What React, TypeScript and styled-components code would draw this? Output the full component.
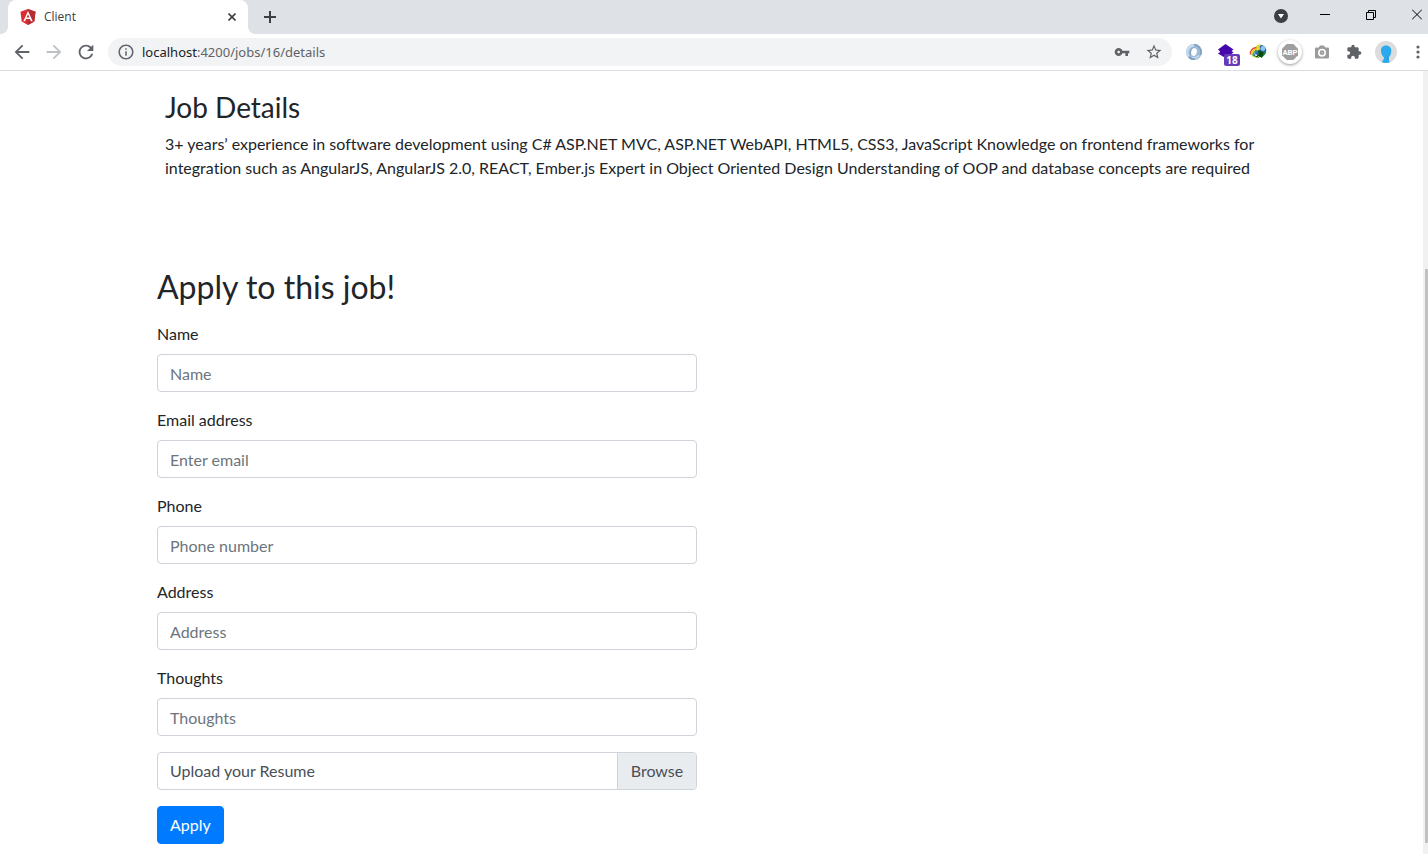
import React, { useState } from "react";
import styled, { createGlobalStyle } from "styled-components";

const GlobalStyle = createGlobalStyle`
  *, *::before, *::after { box-sizing: border-box; }
  html, body { margin: 0; background: #fff; }
  body {
    font-family: Lato, "Liberation Sans", sans-serif;
    font-size: 16px;
    font-variant-ligatures: none;
    line-height: 24px;
    color: #212529;
  }
  button, input { font: inherit; }
  svg { display: block; flex: none; }
`;

const Window = styled.div`
  display: flex;
  flex-direction: column;
  min-height: 100vh;
  overflow: hidden;
`;

/* ---------- browser chrome ---------- */

const TabStrip = styled.div`
  display: flex;
  height: 34px;
  padding-left: 8px;
  background: #dee1e6;
  font-family: "Open Sans", "Noto Sans", sans-serif;
`;

const Tab = styled.div`
  position: relative;
  display: flex;
  align-items: center;
  gap: 8px;
  width: 240px;
  padding: 0 8px 0 12px;
  border-radius: 8px 8px 0 0;
  background: #fff;
  color: #3c4043;
  font-size: 12px;
  line-height: 16px;

  &::before,
  &::after {
    content: "";
    position: absolute;
    bottom: 0;
    width: 8px;
    height: 8px;
  }
  &::before {
    right: 100%;
    background: radial-gradient(circle at 0 0, transparent 8px, #fff 8px);
  }
  &::after {
    left: 100%;
    background: radial-gradient(circle at 100% 0, transparent 8px, #fff 8px);
  }
`;

const TabTitle = styled.span`
  flex: 1;
`;

const IconButton = styled.button<{ $width?: number; $color?: string }>`
  display: flex;
  flex: none;
  align-items: center;
  justify-content: center;
  width: ${(p) => p.$width ?? 32}px;
  height: 32px;
  padding: 0;
  border: 0;
  background: transparent;
  color: ${(p) => p.$color ?? "#5f6368"};
`;

const NewTabButton = styled(IconButton)`
  margin: 1px 0 0 6px;
`;

const WindowControls = styled.div`
  display: flex;
  align-items: flex-start;
  margin-left: auto;
`;

const WindowButton = styled(IconButton)`
  height: 29px;
`;

const CloseWindowButton = styled(WindowButton)`
  margin-left: 12px;
`;

const Toolbar = styled.div`
  display: flex;
  align-items: center;
  height: 37px;
  padding-left: 6px;
  border-bottom: 1px solid #dadce0;
  background: #fff;
`;

const AddressBar = styled.div`
  display: flex;
  flex: 1;
  align-items: center;
  height: 28px;
  margin: 0 6px;
  padding: 0 2px 0 9px;
  border-radius: 14px;
  background: #f1f3f4;
  color: #5f6368;
`;

const Url = styled.div`
  flex: 1;
  padding-left: 7px;
  color: #5f6368;
  font-family: "Noto Sans", "Open Sans", sans-serif;
  font-size: 13px;
  line-height: 20px;
`;

const UrlHost = styled.span`
  color: #202124;
`;

const CountedButton = styled(IconButton)`
  position: relative;
`;

const Badge = styled.span`
  position: absolute;
  right: 2px;
  bottom: 2px;
  width: 16px;
  height: 12px;
  border-radius: 2px;
  background: #673ab7;
  color: #fff;
  font-family: "Open Sans", sans-serif;
  font-size: 10px;
  font-weight: 700;
  line-height: 12px;
  text-align: center;
`;

const BlockerDisc = styled.span`
  display: flex;
  align-items: center;
  justify-content: center;
  width: 24px;
  height: 24px;
  border-radius: 50%;
  background: #fff;
  box-shadow: 0 1px 3px rgba(0, 0, 0, 0.4);
`;

const MenuButton = styled(IconButton)`
  margin-left: 6px;
`;

/* ---------- page ---------- */

const Viewport = styled.div`
  display: flex;
  flex: 1;
`;

const Main = styled.main`
  flex: 1;
  padding: 19px 0 10px 1px;
`;

const Container = styled.div`
  max-width: 1140px;
  margin: 0 auto;
  padding: 0 15px;
`;

const Details = styled.section`
  margin-bottom: 88px;
  padding: 0 8px;
`;

const DetailsTitle = styled.h3`
  margin: 0 0 8px;
  font-size: 28px;
  font-weight: 400;
  line-height: 34px;
`;

const Description = styled.p`
  margin: 0;
`;

const ApplyTitle = styled.h2`
  margin: 0 0 16px;
  font-size: 32px;
  font-weight: 400;
  line-height: 38px;
`;

const Form = styled.form`
  display: flex;
  flex-direction: column;
  align-items: flex-start;
  gap: 16px;
  width: calc(50% - 15px);
`;

const Field = styled.div`
  display: flex;
  flex-direction: column;
  gap: 8px;
  width: 100%;
`;

const TextInput = styled.input`
  width: 100%;
  height: 38px;
  padding: 6px 12px;
  border: 1px solid #ced4da;
  border-radius: 4px;
  background: #fff;
  color: #495057;

  &::placeholder {
    color: #6c757d;
    opacity: 1;
  }
`;

const FilePicker = styled.label`
  position: relative;
  display: flex;
  width: 100%;
  height: 38px;
  border: 1px solid #ced4da;
  border-radius: 4px;
  overflow: hidden;
  color: #495057;
`;

const FileInput = styled.input`
  position: absolute;
  inset: 0;
  opacity: 0;
`;

const FileName = styled.span`
  flex: 1;
  padding: 6px 12px;
`;

const Browse = styled.span`
  min-width: 79px;
  padding: 6px 12px;
  border-left: 1px solid #ced4da;
  background: #e9ecef;
  text-align: center;
`;

const SubmitButton = styled.button`
  height: 38px;
  padding: 6px 12px;
  border: 1px solid #007bff;
  border-radius: 4px;
  background: #007bff;
  color: #fff;
  line-height: 24px;
`;

const ScrollTrack = styled.div`
  display: flex;
  flex-direction: column;
  align-items: flex-end;
  width: 5px;
  background: #f1f1f1;
`;

const ScrollGap = styled.div<{ $share: number }>`
  flex: ${(p) => p.$share} 0 0;
`;

const ScrollThumb = styled.div`
  flex: 574 0 0;
  width: 3px;
  background: #c1c1c1;
`;

/* ---------- icons ---------- */

const Glyph = ({ size, d }: { size: number; d: string }) => (
  <svg width={size} height={size} viewBox="0 0 24 24" fill="currentColor" aria-hidden="true">
    <path d={d} />
  </svg>
);

const icons = {
  back: "M20 11H7.83l5.59-5.59L12 4l-8 8 8 8 1.41-1.41L7.83 13H20v-2z",
  forward: "M12 4l-1.41 1.41L16.17 11H4v2h12.17l-5.58 5.59L12 20l8-8z",
  reload:
    "M17.65 6.35C16.2 4.9 14.21 4 12 4c-4.42 0-7.99 3.58-7.99 8s3.57 8 7.99 8c3.73 0 6.84-2.55 7.73-6h-2.08c-.82 2.33-3.04 4-5.65 4-3.31 0-6-2.69-6-6s2.69-6 6-6c1.66 0 3.14.69 4.22 1.78L13 11h7V4l-2.35 2.35z",
  info: "M11 7h2v2h-2zm0 4h2v6h-2zm1-9C6.48 2 2 6.48 2 12s4.48 10 10 10 10-4.48 10-10S17.52 2 12 2zm0 18c-4.41 0-8-3.59-8-8s3.59-8 8-8 8 3.59 8 8-3.59 8-8 8z",
  key: "M12.65 10C11.83 7.67 9.61 6 7 6c-3.31 0-6 2.69-6 6s2.69 6 6 6c2.61 0 4.83-1.67 5.65-4H17v4h4v-4h2v-4H12.65zM7 14c-1.1 0-2-.9-2-2s.9-2 2-2 2 .9 2 2-.9 2-2 2z",
  star: "M22 9.24l-7.19-.62L12 2 9.19 8.63 2 9.24l5.46 4.73L5.82 21 12 17.27 18.18 21l-1.63-7.03L22 9.24zM12 15.4l-3.76 2.27 1-4.28-3.32-2.88 4.38-.38L12 6.1l1.71 4.04 4.38.38-3.32 2.88 1 4.28L12 15.4z",
  puzzle:
    "M20.5 11H19V7c0-1.1-.9-2-2-2h-4V3.5C13 2.12 11.88 1 10.5 1S8 2.12 8 3.5V5H4c-1.1 0-1.99.9-1.99 2v3.8H3.5c1.49 0 2.7 1.21 2.7 2.7s-1.21 2.7-2.7 2.7H2V20c0 1.1.9 2 2 2h3.8v-1.5c0-1.49 1.21-2.7 2.7-2.7 1.49 0 2.7 1.21 2.7 2.7V22H17c1.1 0 2-.9 2-2v-4h1.5c1.38 0 2.5-1.12 2.5-2.5S21.88 11 20.5 11z",
};

const AngularLogo = () => (
  <svg width="16" height="16" viewBox="0 0 16 16" aria-hidden="true">
    <path d="M8 0l7.5 2.7-1.2 9.8L8 16l-6.3-3.5L.5 2.7z" fill="#dd2b32" />
    <path d="M8 0l7.5 2.7-1.2 9.8L8 16z" fill="#b52e31" />
    <path d="M8 1.9L3.3 12.3h1.8l.9-2.3h4l.9 2.3h1.8L8 1.9zm0 3.4l1.4 3.2H6.6z" fill="#fff" />
  </svg>
);

const Swirl = () => (
  <svg width="16" height="16" viewBox="0 0 16 16" fill="none" aria-hidden="true">
    <circle cx="8" cy="8" r="8" fill="#9dbad6" />
    <path d="M2.500 12.500A7 7 0 0 1 8 1.500" stroke="#c9dcec" strokeWidth="2.400" />
    <path d="M8 .8a7.200 7.200 0 0 1 6.500 10" stroke="#7fa1c1" strokeWidth="1.500" />
    <path d="M13 11.500A6 6 0 0 1 6 13.600" stroke="#c3d8ea" strokeWidth="2" />
    <path d="M3 13.200a7 7 0 0 0 6 1.900" stroke="#6f94b8" strokeWidth="1.200" />
    <path d="M5 11C3.800 8 5 5 8 3.800" stroke="#7c9ec0" strokeWidth="1.200" />
    <ellipse cx="8" cy="8" rx="2.800" ry="3.900" transform="rotate(15 8 8)" fill="#fff" />
  </svg>
);

const Layers = () => (
  <svg width="18" height="18" viewBox="0 0 18 18" aria-hidden="true">
    <path d="M8.500 1L16.500 6.500l-2 1.500 2 1.500L8.500 15 1 10.500 3 8.500 1 6.500z" fill="#4608ad" />
    <path d="M1 8.300l2 1" stroke="#fff" strokeWidth=".8" />
  </svg>
);

const Globe = () => (
  <svg width="18" height="18" viewBox="0 0 18 18" fill="none" aria-hidden="true">
    <circle cx="11.500" cy="7.500" r="5.800" fill="#2765be" />
    <circle cx="14" cy="5.500" r="2.400" fill="#8fc6f4" />
    <path d="M7 3.500c1.500-2 4-2.300 5-1.500l-1.500 2 1 2-3 2-2.500-2z" fill="#d8df3c" />
    <path d="M1.500 11.500C.8 7.500 4 4.300 7.500 4.800" stroke="#e5482b" strokeWidth="1.300" />
    <path d="M2.700 12C2.300 8.500 5 6 8 6.200" stroke="#f6c927" strokeWidth="1.500" />
    <path d="M4 12.500C4 9.800 6 7.800 8.500 7.800" stroke="#49aa3c" strokeWidth="1.600" />
    <path d="M5.300 13C5.500 11 7 9.500 9 9.400" stroke="#3572cc" strokeWidth="1.300" />
    <path d="M8 10.500l4-2.500 4.500 1.500c-.5 2.500-2.500 4.500-4.500 5z" fill="#15802a" />
    <path d="M9 7l5.500 2.500-1.500 5.500-2-1.500-2 1.500-6.500-3 5 1 2.500-2z" fill="#0b4a16" />
    <path d="M3 12.700l5 2 2-1.500" stroke="#a3d42c" />
  </svg>
);

const Blocker = () => (
  <svg width="16" height="16" viewBox="0 0 16 16" aria-hidden="true">
    <path d="M4.700 0h6.600L16 4.700v6.600L11.300 16H4.700L0 11.300V4.700z" fill="#9e9e9e" />
    <text
      x="8"
      y="10.800"
      fill="#fff"
      fontFamily="Roboto, sans-serif"
      fontSize="7.800"
      fontWeight="700"
      textAnchor="middle"
    >
      ABP
    </text>
  </svg>
);

const Camera = () => (
  <svg width="16" height="16" viewBox="0 0 16 16" aria-hidden="true">
    <path d="M2 3.500h2.800L6 1.500h4l1.200 2H14a1 1 0 0 1 1 1v9a1 1 0 0 1-1 1H2a1 1 0 0 1-1-1v-9a1 1 0 0 1 1-1z" fill="#9b9b9b" />
    <circle cx="8" cy="8.700" r="3.200" fill="#9b9b9b" stroke="#fff" strokeWidth="1.600" />
    <circle cx="8" cy="8.700" r="1" fill="#b8b8b8" />
  </svg>
);

const Avatar = () => (
  <svg width="22" height="22" viewBox="0 0 22 22" aria-hidden="true">
    <circle cx="11" cy="11" r="11" fill="#dcdcdc" />
    <path
      d="M6 9.500C6 6.200 8.300 4.500 11 4.500s5.300 1.500 5.300 5.300c0 2.700-.8 5.200-2.500 6.500l.2 3.200 1 1.700a11 11 0 0 1-8.500-.2l2.200-1.800.2-3C7 15 6 12 6 9.500z"
      fill="#2aa9ec"
    />
    <path d="M7.500 20l1.300-1.500M12.800 16l.3 3" stroke="#1682c0" strokeWidth=".6" />
  </svg>
);

/* ---------- content ---------- */

const fields = [
  { id: "name", label: "Name", placeholder: "Name", type: "text" },
  { id: "email", label: "Email address", placeholder: "Enter email", type: "email" },
  { id: "phone", label: "Phone", placeholder: "Phone number", type: "tel" },
  { id: "address", label: "Address", placeholder: "Address", type: "text" },
  { id: "thoughts", label: "Thoughts", placeholder: "Thoughts", type: "text" },
];

const BrowserChrome = () => (
  <header>
    <TabStrip>
      <Tab>
        <AngularLogo />
        <TabTitle>Client</TabTitle>
        <IconButton $width={16} $color="#3c4043" aria-label="Close tab">
          <svg width="8" height="8" viewBox="0 0 8 8" stroke="currentColor" strokeWidth="1.6">
            <path d="M.5.5l7 7M7.500.5l-7 7" />
          </svg>
        </IconButton>
      </Tab>
      <NewTabButton $color="#3c4043" aria-label="New tab">
        <svg width="12" height="12" viewBox="0 0 12 12" stroke="currentColor" strokeWidth="2">
          <path d="M6 0v12M0 6h12" />
        </svg>
      </NewTabButton>
      <WindowControls>
        <IconButton $width={42} $color="#3c4043" aria-label="Search tabs">
          <svg width="14" height="14" viewBox="0 0 14 14">
            <circle cx="7" cy="7" r="7" fill="currentColor" />
            <path d="M4 5h6L7 9.500z" fill="#fff" />
          </svg>
        </IconButton>
        <WindowButton $width={46} $color="#000" aria-label="Minimize">
          <svg width="10" height="11" viewBox="0 0 10 11" stroke="currentColor">
            <path d="M0 5.500h10" />
          </svg>
        </WindowButton>
        <WindowButton $width={46} $color="#000" aria-label="Restore">
          <svg width="10" height="11" viewBox="0 0 10 11" fill="none" stroke="currentColor">
            <path d="M.5 3.500h7v7h-7zM2.500 3.500v-2h7v7h-2" />
          </svg>
        </WindowButton>
        <CloseWindowButton $width={22} $color="#000" aria-label="Close window">
          <svg width="10" height="11" viewBox="0 0 10 11" stroke="currentColor">
            <path d="M0 .5l10 10M10 .5l-10 10" />
          </svg>
        </CloseWindowButton>
      </WindowControls>
    </TabStrip>
    <Toolbar>
      <IconButton aria-label="Back">
        <Glyph size={22} d={icons.back} />
      </IconButton>
      <IconButton $color="#bdc1c6" aria-label="Forward">
        <Glyph size={22} d={icons.forward} />
      </IconButton>
      <IconButton aria-label="Reload">
        <Glyph size={22} d={icons.reload} />
      </IconButton>
      <AddressBar>
        <Glyph size={18} d={icons.info} />
        <Url>
          <UrlHost>localhost</UrlHost>:4200/jobs/16/details
        </Url>
        <IconButton aria-label="Saved passwords">
          <Glyph size={16} d={icons.key} />
        </IconButton>
        <IconButton aria-label="Bookmark this page">
          <Glyph size={18} d={icons.star} />
        </IconButton>
      </AddressBar>
      <IconButton aria-label="Swirl extension">
        <Swirl />
      </IconButton>
      <CountedButton aria-label="Layers extension">
        <Layers />
        <Badge>18</Badge>
      </CountedButton>
      <IconButton aria-label="Download manager">
        <Globe />
      </IconButton>
      <IconButton aria-label="Ad blocker">
        <BlockerDisc>
          <Blocker />
        </BlockerDisc>
      </IconButton>
      <IconButton aria-label="Screenshot">
        <Camera />
      </IconButton>
      <IconButton aria-label="Extensions">
        <Glyph size={16} d={icons.puzzle} />
      </IconButton>
      <IconButton aria-label="Profile">
        <Avatar />
      </IconButton>
      <MenuButton $width={20} aria-label="Menu">
        <svg width="4" height="14" viewBox="0 0 4 14" fill="currentColor">
          <circle cx="2" cy="2" r="1.600" />
          <circle cx="2" cy="7" r="1.600" />
          <circle cx="2" cy="12" r="1.600" />
        </svg>
      </MenuButton>
    </Toolbar>
  </header>
);

export default function App() {
  const [fileName, setFileName] = useState("Upload your Resume");

  return (
    <Window>
      <GlobalStyle />
      <BrowserChrome />
      <Viewport>
        <Main>
          <Container>
            <Details>
              <DetailsTitle>Job Details</DetailsTitle>
              <Description>
                3+ years’ experience in software development using C# ASP.NET MVC, ASP.NET WebAPI,
                HTML5, CSS3, JavaScript Knowledge on frontend frameworks for integration such as
                AngularJS, AngularJS 2.0, REACT, Ember.js Expert in Object Oriented Design
                Understanding of OOP and database concepts are required
              </Description>
            </Details>
            <ApplyTitle>Apply to this job!</ApplyTitle>
            <Form onSubmit={(e) => e.preventDefault()}>
              {fields.map((f) => (
                <Field key={f.id}>
                  <label htmlFor={f.id}>{f.label}</label>
                  <TextInput id={f.id} type={f.type} placeholder={f.placeholder} />
                </Field>
              ))}
              <FilePicker htmlFor="resume">
                <FileInput
                  id="resume"
                  type="file"
                  onChange={(e) => setFileName(e.target.files?.[0]?.name ?? "Upload your Resume")}
                />
                <FileName>{fileName}</FileName>
                <Browse>Browse</Browse>
              </FilePicker>
              <SubmitButton type="submit">Apply</SubmitButton>
            </Form>
          </Container>
        </Main>
        <ScrollTrack aria-hidden="true">
          <ScrollGap $share={198} />
          <ScrollThumb />
          <ScrollGap $share={11} />
        </ScrollTrack>
      </Viewport>
    </Window>
  );
}
